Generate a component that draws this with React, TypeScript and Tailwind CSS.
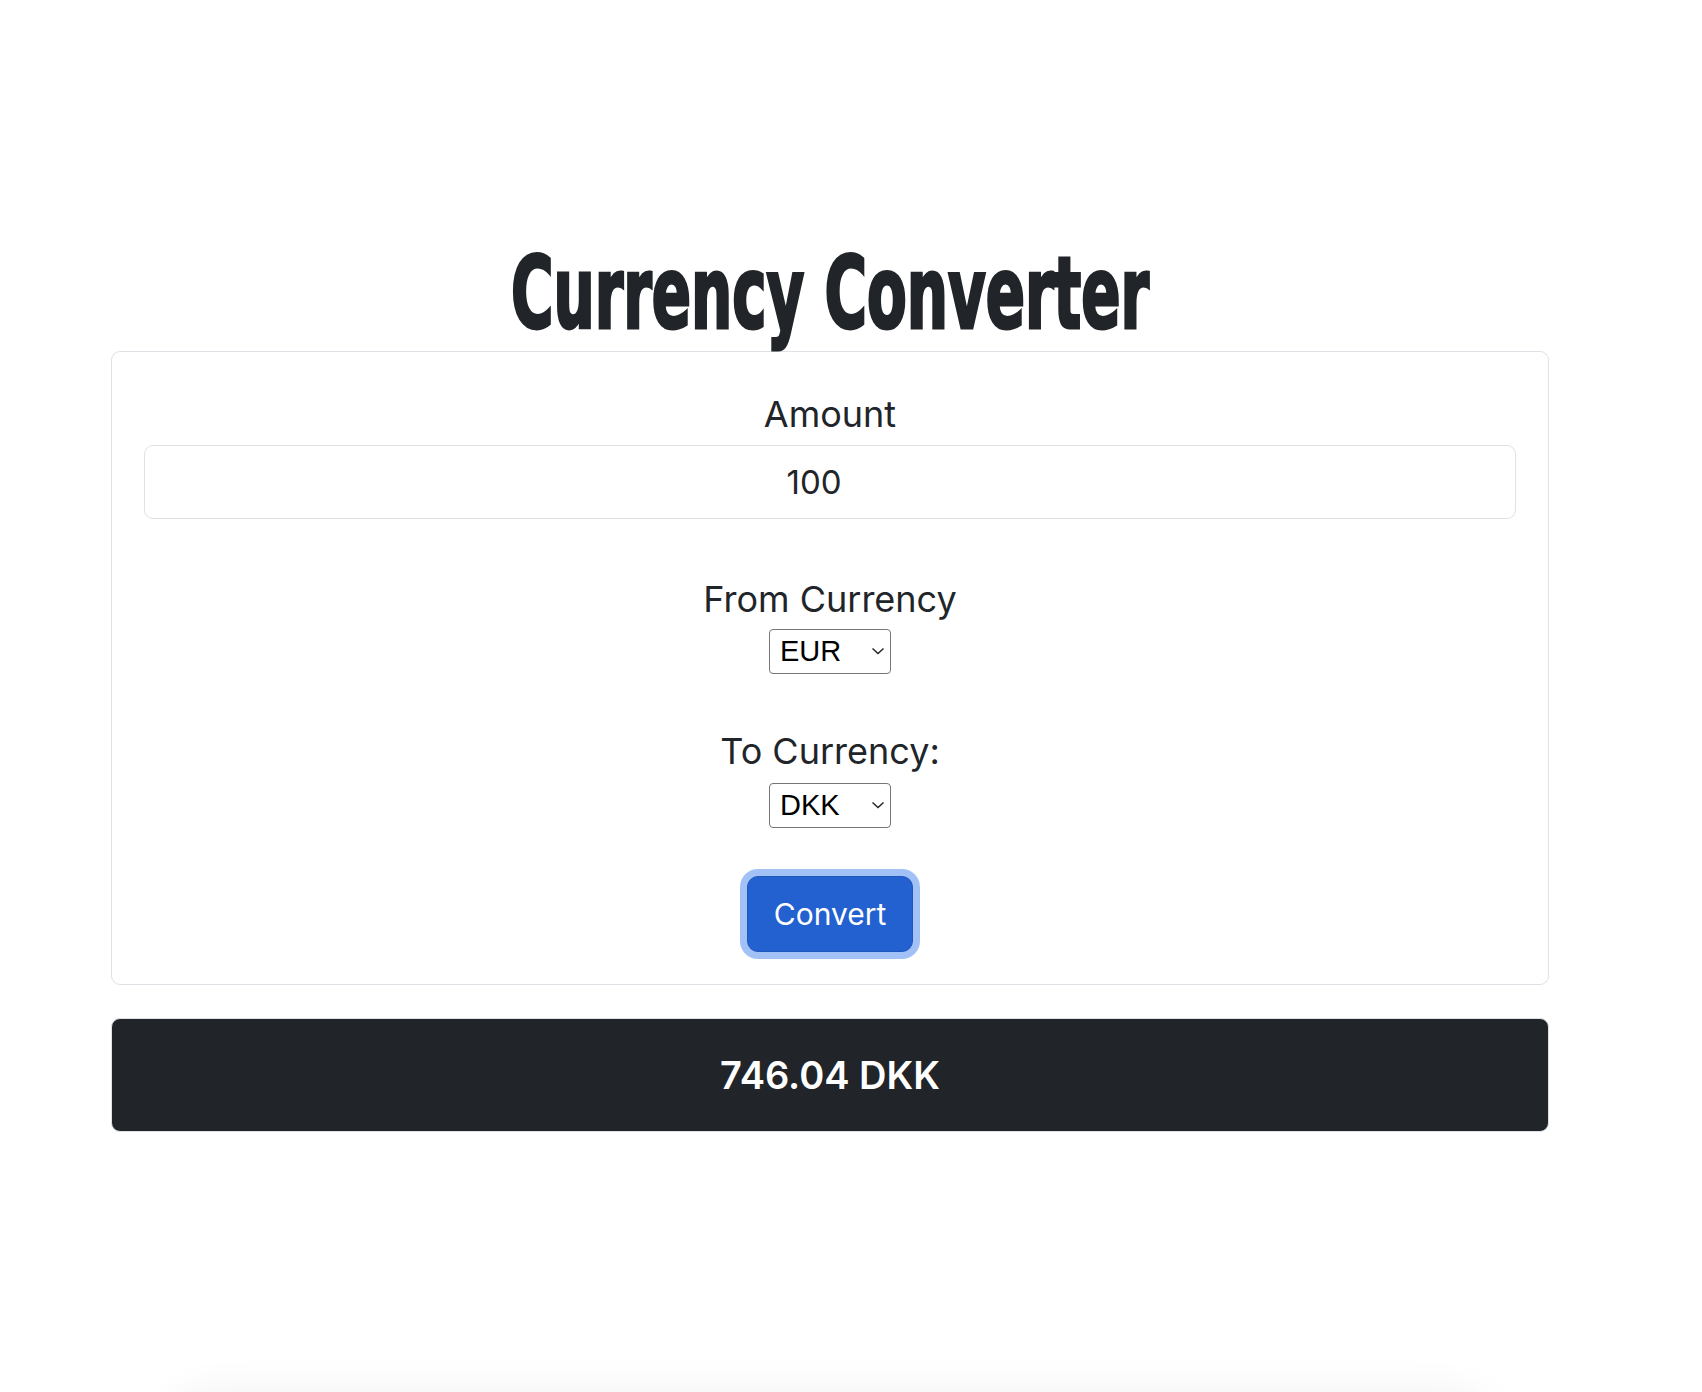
import { useState } from "react";

const currencies = ["EUR", "DKK", "USD", "GBP", "SEK", "NOK"];

function CurrencySelect({
  value,
  onChange,
}: {
  value: string;
  onChange: (v: string) => void;
}) {
  return (
    <div className="relative w-[122px] h-[45px]">
      <select
        value={value}
        onChange={(e) => onChange(e.target.value)}
        className="appearance-none w-full h-full border border-[#767676] rounded-[4px] bg-white pl-[10px] text-[29px] leading-none text-black outline-none font-['Liberation_Sans',Arial,sans-serif]"
      >
        {currencies.map((c) => (
          <option key={c} value={c}>
            {c}
          </option>
        ))}
      </select>
      <svg
        className="pointer-events-none absolute right-[6px] top-[18px]"
        width="14"
        height="8"
        viewBox="0 0 14 8"
        fill="none"
      >
        <path d="M1.5 1.5l5.5 5 5.5-5" stroke="#222" strokeWidth="1.4" />
      </svg>
    </div>
  );
}

export default function App() {
  const [amount, setAmount] = useState("100");
  const [from, setFrom] = useState("EUR");
  const [to, setTo] = useState("DKK");

  return (
    <div className="relative h-[1392px] overflow-hidden bg-white text-[#212529] font-['Inter',sans-serif]">
      <div className="ml-[111px] w-[1438px] pt-[236px]">
        <h1 className="text-center text-[99px] leading-[115px] font-bold font-['Liberation_Sans_Narrow','DejaVu_Sans_Condensed',sans-serif] scale-x-[0.65] [-webkit-text-stroke:3px_#212529]">
          Currency Converter
        </h1>

        <div className="border border-[#dee2e6] rounded-[9px] p-[32px] flex flex-col items-center">
          <label className="text-[36px] leading-[60px]">Amount</label>
          <input
            value={amount}
            onChange={(e) => setAmount(e.target.value)}
            className="mt-[1px] w-full h-[74px] border border-[#dee2e6] rounded-[9px] text-center pr-[32px] text-[33px] text-[#212529] outline-none"
          />

          <label className="mt-[50px] text-[36px] leading-[60px]">
            From Currency
          </label>
          <CurrencySelect value={from} onChange={setFrom} />

          <label className="mt-[47px] text-[36px] leading-[60px]">
            To Currency:
          </label>
          <div className="mt-[2px]">
            <CurrencySelect value={to} onChange={setTo} />
          </div>

          <button className="mt-[48px] h-[76px] px-[26px] rounded-[11px] bg-[#2360d0] border border-[#1f56bb] text-white text-[30px] ring-[7px] ring-[#a2c2f7]">
            Convert
          </button>
        </div>

        <div className="mt-[33px] h-[114px] rounded-[9px] border border-[#dee2e6] bg-[#212529] flex items-center justify-center">
          <span className="text-white text-[38px] font-semibold">
            746.04 DKK
          </span>
        </div>
      </div>

      <div className="absolute left-[170px] right-[210px] top-[1392px] h-[80px] rounded-[40px] shadow-[0_0_40px_rgba(0,0,0,0.06)]" />
    </div>
  );
}
